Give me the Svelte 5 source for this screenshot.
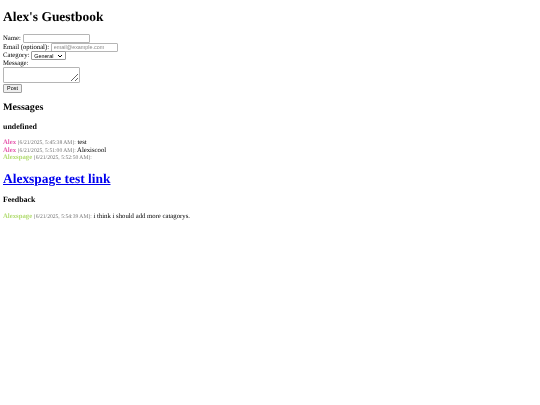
<script lang="ts">
  const general = [
    { name: 'Alex', color: '#e558ad', time: '6/21/2025, 5:45:38 AM', text: 'test' },
    { name: 'Alex', color: '#e558ad', time: '6/21/2025, 5:51:00 AM', text: 'Alexiscool' },
    { name: 'Alexspage', color: '#b2dc72', time: '6/21/2025, 5:52:50 AM', text: '' }
  ];
  const feedback = [
    { name: 'Alexspage', color: '#b2dc72', time: '6/21/2025, 5:54:39 AM', text: 'i think i should add more catagorys.' }
  ];
</script>

<main>
  <h1>Alex's Guestbook</h1>
  <form>
    <div class="row"><label for="name">Name:</label> <input id="name" class="field" type="text" /></div>
    <div class="row"><label for="email">Email (optional):</label> <input id="email" class="field" type="email" placeholder="email@example.com" /></div>
    <div class="row">
      <label for="cat">Category:</label>
      <select id="cat"><option>General</option><option>Feedback</option></select>
    </div>
    <div class="row"><label for="msg">Message:</label></div>
    <textarea id="msg"></textarea>
    <button type="button">Post</button>
  </form>

  <h2>Messages</h2>
  <h3>undefined</h3>
  <div class="list">
    {#each general as m}
      <div class="msg"><b style="color: {m.color}">{m.name}</b> <small>[{m.time}]:</small> {m.text}</div>
    {/each}
  </div>

  <h1 class="linkhead"><a href="#top">Alexspage test link</a></h1>

  <h3 class="fb">Feedback</h3>
  <div class="list">
    {#each feedback as m}
      <div class="msg"><b style="color: {m.color}">{m.name}</b> <small>[{m.time}]:</small> {m.text}</div>
    {/each}
  </div>
</main>

<style>
  :global(body) {
    margin: 0;
    background: #fff;
  }
  main {
    padding: 9px 3px;
    font-family: 'Liberation Serif', 'Times New Roman', serif;
    font-size: 6.72px;
    line-height: 8px;
    color: #000;
    text-rendering: geometricPrecision;
    will-change: transform;
  }
  h1 {
    font-size: 13.44px;
    line-height: 16px;
    margin: 0 0 9px;
  }
  h2 {
    font-size: 10.08px;
    line-height: 12px;
    margin: 9px 0 0;
  }
  h3 {
    font-size: 7.9px;
    line-height: 9px;
    margin: 8px 0 8px;
  }
  .row {
    height: 8.4px;
    padding-top: 0.2px;
    white-space: nowrap;
  }
  input,
  select,
  textarea,
  button {
    font-family: 'Liberation Sans', Arial, sans-serif;
    font-size: 5.4px;
    box-sizing: border-box;
    background: #fff;
    color: #000;
    margin: 0;
    vertical-align: middle;
  }
  .field {
    width: 67px;
    height: 9px;
    border: 1px solid #b5b5b5;
    border-radius: 1px;
    padding: 0 2px;
  }
  input::placeholder {
    color: #8a8a8a;
  }
  select {
    appearance: none;
    width: 35px;
    height: 8.5px;
    border: 1px solid #9a9a9a;
    border-radius: 1px;
    padding: 0 0 0 2px;
    background: #fff url("data:image/svg+xml,%3Csvg xmlns='http://www.w3.org/2000/svg' width='6' height='4'%3E%3Cpath d='M1 1l2 2 2-2' fill='none' stroke='%23000' stroke-width='1'/%3E%3C/svg%3E") no-repeat right 2px center;
  }
  textarea {
    display: block;
    width: 77px;
    height: 15.5px;
    margin-top: -1px;
    border: 1px solid #b5b5b5;
    border-radius: 1px;
  }
  button {
    display: block;
    width: 19px;
    height: 9px;
    margin-top: 1.5px;
    padding: 0;
    line-height: 7px;
    border: 1px solid #a0a0a0;
    border-radius: 1px;
    background: #efefef;
  }
  small {
    font-size: 5.6px;
    color: #777;
  }
  .msg {
    height: 7.5px;
    line-height: 7.5px;
    white-space: nowrap;
  }
  .linkhead {
    margin: 9px 0 0;
  }
  .fb {
    margin: 8px 0 9px;
  }
  a {
    color: #0000ee;
  }
</style>
